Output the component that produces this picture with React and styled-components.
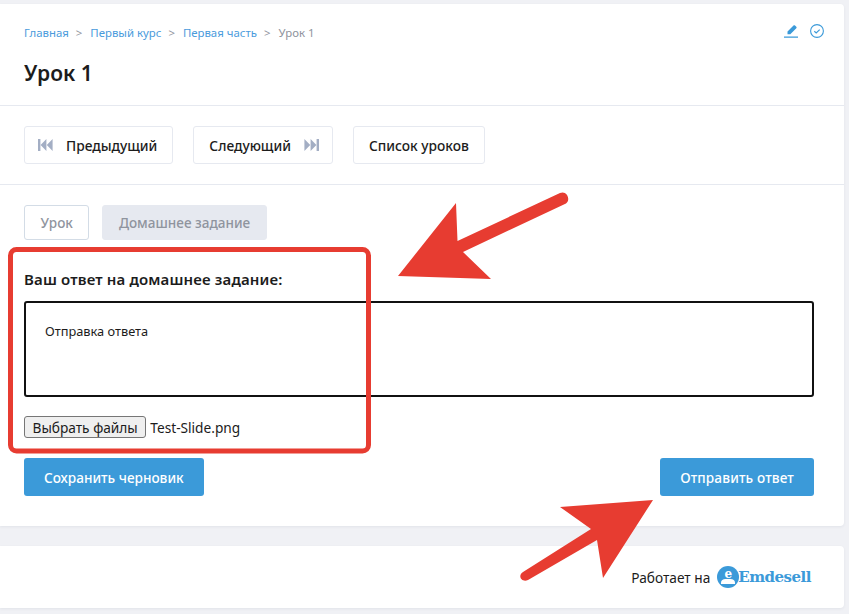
import React from 'react';
import styled, { createGlobalStyle } from 'styled-components';

const colors = {
  page: '#f0f1f5',
  line: '#e6e9f0',
  blue: '#3b9ad9',
  link: '#4a9bdc',
  red: '#e73c31',
  text: '#1c1c1c',
  gray: '#8f949e',
};

const Global = createGlobalStyle`
  html, body {
    margin: 0;
    padding: 0;
    background: ${colors.page};
  }
  body {
    font-family: "Noto Sans", "Open Sans", sans-serif;
    color: ${colors.text};
  }
`;

const Page = styled.div`
  position: relative;
  width: 849px;
  height: 614px;
  padding: 4px 5px 0 0;
  box-sizing: border-box;
  overflow: hidden;
`;

const Card = styled.div`
  background: #fff;
  border-radius: 0 4px 4px 0;
  box-shadow: 0 1px 3px rgba(40, 50, 80, 0.07);
`;

const Header = styled.div`
  height: 102px;
  padding: 20px 20px 0 24px;
  box-sizing: border-box;
  border-bottom: 1px solid ${colors.line};
  display: flex;
  justify-content: space-between;
`;

const Crumbs = styled.div`
  display: flex;
  align-items: center;
  height: 16px;
  font-size: 11.4px;
  color: ${colors.gray};
`;

const Crumb = styled.span`
  color: ${colors.link};
`;

const Sep = styled.span`
  margin: 0 8px 0 7px;
`;

const Title = styled.h1`
  margin: 19px 0 0;
  font-size: 21px;
  line-height: 28px;
  font-weight: 600;
`;

const Tools = styled.div`
  display: flex;
  gap: 11px;
  align-items: center;
  height: 14px;
`;

const Toolbar = styled.div`
  height: 79px;
  padding: 20px 24px 0;
  box-sizing: border-box;
  border-bottom: 1px solid ${colors.line};
  display: flex;
  gap: 20px;
  align-items: flex-start;
`;

const NavButton = styled.div`
  height: 38px;
  padding: 0 ${p => p.$right || 15}px 0 ${p => p.$left || 13}px;
  box-sizing: border-box;
  border: 1px solid ${colors.line};
  border-radius: 3px;
  display: flex;
  align-items: center;
  gap: 13px;
  font-size: 13.75px;
  font-weight: 500;
`;

const Body = styled.div`
  padding: 20px 30px 30px 24px;
`;

const Tabs = styled.div`
  display: flex;
  gap: 13px;
`;

const Tab = styled.div`
  height: 35px;
  padding: 0 15.5px;
  box-sizing: border-box;
  display: flex;
  align-items: center;
  border-radius: 3px;
  font-size: 13.55px;
  font-weight: 500;
  color: ${colors.gray};
  border: 1px solid ${p => (p.$active ? colors.line : '#d3dce6')};
  background: ${p => (p.$active ? colors.line : '#fff')};
`;

const Label = styled.div`
  margin-top: 29px;
  font-size: 15px;
  line-height: 20px;
  font-weight: 600;
  letter-spacing: 0.15px;
`;

const Answer = styled.div`
  margin-top: 12px;
  height: 96px;
  padding: 20px 19px 0;
  box-sizing: border-box;
  border: 2px solid #111;
  border-radius: 3px;
  font-size: 12.8px;
  line-height: 17px;
`;

const FileRow = styled.div`
  margin-top: 19px;
  display: flex;
  align-items: center;
  gap: 4px;
  font-size: 13.7px;
`;

const FileButton = styled.div`
  height: 22px;
  padding: 0 7.5px;
  box-sizing: border-box;
  display: flex;
  align-items: center;
  background: #efefef;
  border: 1px solid #767676;
  border-radius: 3px;
  font-size: 13.7px;
`;

const Actions = styled.div`
  margin-top: 20px;
  display: flex;
  justify-content: space-between;
`;

const Primary = styled.div`
  height: 38px;
  padding: 0 20px;
  display: flex;
  align-items: center;
  background: ${colors.blue};
  border-radius: 3px;
  color: #fff;
  font-size: 13.6px;
  font-weight: 500;
  letter-spacing: ${p => (p.$spaced ? '0.14px' : 'normal')};
`;

const Footer = styled(Card)`
  margin-top: 20px;
  height: 62px;
  padding: 0 33px 0 0;
  box-sizing: border-box;
  display: flex;
  justify-content: flex-end;
  align-items: center;
  gap: 7px;
  font-size: 13.7px;
`;

const Brand = styled.div`
  display: flex;
  align-items: center;
  color: ${colors.blue};
  font-family: "DejaVu Serif", "Liberation Serif", serif;
  font-size: 15px;
  font-weight: 700;
  letter-spacing: -0.5px;

  svg {
    margin-right: -1px;
  }
`;

const Overlay = styled.svg`
  position: absolute;
  left: 0;
  top: 0;
  pointer-events: none;
`;

const Skip = ({ flip }) => (
  <svg width="15" height="12" viewBox="0 0 15 12" style={{ transform: flip ? 'scaleX(-1)' : undefined }}>
    <path fill="#a3aec4" d="M0 0h2.4v12H0zM2.6 6 8.4 0v12zM8.8 6 14.6 0v12z" />
  </svg>
);

const App = () => (
  <Page>
    <Global />
    <Card>
      <Header>
        <div>
          <Crumbs>
            <Crumb>Главная</Crumb><Sep>&gt;</Sep>
            <Crumb>Первый курс</Crumb><Sep>&gt;</Sep>
            <Crumb>Первая часть</Crumb><Sep>&gt;</Sep>
            Урок 1
          </Crumbs>
          <Title>Урок 1</Title>
        </div>
        <Tools>
          <svg width="16" height="14" viewBox="0 0 16 14">
            <path fill={colors.blue} d="M1 12.4h14v1.3H1zM4.5 7.5 10.5 1.5c.5-.5 1-.5 1.500 0l1.300 1.300c.5.5.5 1 0 1.500l-6 6H4.500z" />
          </svg>
          <svg width="14" height="14" viewBox="0 0 14 14" fill="none" stroke={colors.blue}>
            <circle cx="7" cy="7" r="6.400" strokeWidth="1.100" />
            <path d="M4.300 7.200 6.200 9l3.500-3.400" strokeWidth="1.200" />
          </svg>
        </Tools>
      </Header>
      <Toolbar>
        <NavButton><Skip />Предыдущий</NavButton>
        <NavButton $left={15} $right={13}>Следующий<Skip flip /></NavButton>
        <NavButton $left={15}>Список уроков</NavButton>
      </Toolbar>
      <Body>
        <Tabs>
          <Tab>Урок</Tab>
          <Tab $active>Домашнее задание</Tab>
        </Tabs>
        <Label>Ваш ответ на домашнее задание:</Label>
        <Answer>Отправка ответа</Answer>
        <FileRow>
          <FileButton>Выбрать файлы</FileButton>
          Test-Slide.png
        </FileRow>
        <Actions>
          <Primary>Сохранить черновик</Primary>
          <Primary $spaced>Отправить ответ</Primary>
        </Actions>
      </Body>
    </Card>
    <Footer>
      Работает на
      <Brand>
        <svg width="22" height="22" viewBox="0 0 22 22">
          <circle cx="11" cy="11" r="11" fill={colors.blue} />
          <path fill="#fff" d="M4 18v-1.500c0-2 2-3.500 4.500-3.500h5c2.500 0 4.500 1.500 4.500 3.500V18z" />
          <text x="11" y="11.500" textAnchor="middle" fontSize="12" fontWeight="700" fill="#fff" fontFamily="DejaVu Serif">e</text>
        </svg>
        Emdesell
      </Brand>
    </Footer>
    <Overlay width="849" height="614" viewBox="0 0 849 614">
      <rect x="10.500" y="249.500" width="358" height="201.500" rx="6" fill="none" stroke={colors.red} strokeWidth="5" />
      <path fill={colors.red} d="M398 276 456 203 457.500 241 560 193c7-3 11 7 6 10.500L463 252 491 279z" />
      <path fill={colors.red} d="M653 500 560 507 591 529 523 572c-6 4-1 11 5 8L597 540 603 578z" />
    </Overlay>
  </Page>
);

export default App;
